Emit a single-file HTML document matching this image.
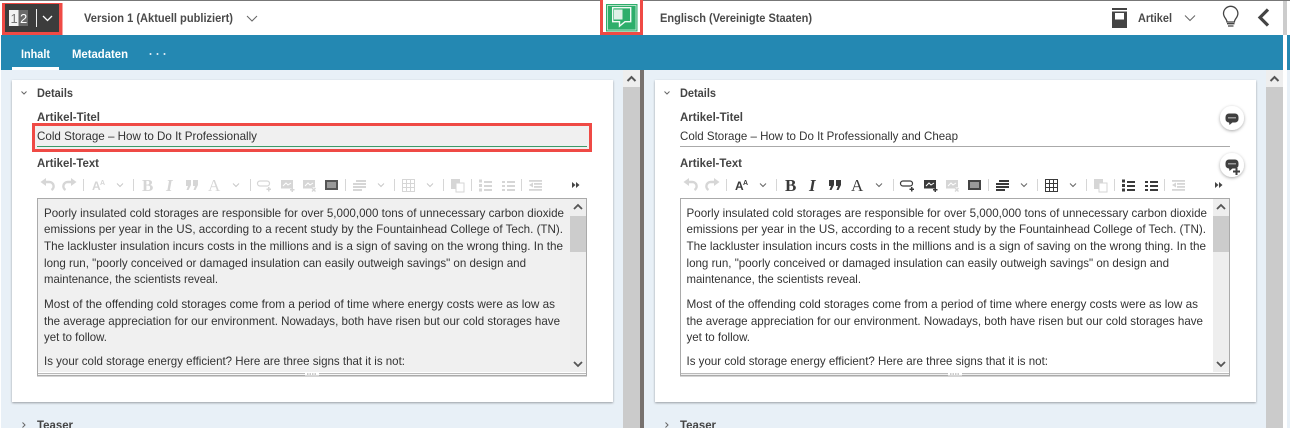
<!DOCTYPE html>
<html lang="de"><head><meta charset="utf-8"><title>Artikel</title>
<style>
html,body{margin:0;padding:0;width:1290px;height:428px;overflow:hidden;background:#fff}
svg{display:block;position:absolute;left:0;top:0}
text{font-family:"Liberation Sans",sans-serif}
.b{font-size:12px;fill:#333;font-weight:400}
.h{font-size:12px;fill:#4a4a4a;font-weight:700}
.l{font-size:12px;fill:#444;font-weight:700}
.w{font-size:12px;fill:#fff;font-weight:700}
.s{font-family:"Liberation Serif",serif;font-size:17px}
.c{fill:none;stroke:#666;stroke-width:1}
</style></head><body>
<svg width="1290" height="428" viewBox="0 0 1290 428" xmlns="http://www.w3.org/2000/svg">
<defs><filter id="sh" x="-5%" y="-5%" width="110%" height="110%"><feDropShadow dx="0" dy="1" stdDeviation="1" flood-color="#000" flood-opacity=".35"/></filter>
<filter id="sc" x="-40%" y="-40%" width="180%" height="180%"><feDropShadow dx="0" dy="1" stdDeviation="1.5" flood-color="#000" flood-opacity=".35"/></filter></defs>

<!-- base -->
<rect width="1290" height="428" fill="#fff"/>
<rect width="1290" height="1" fill="#777"/>
<rect x="1" y="35" width="1282" height="35" fill="#2488b2"/>
<rect x="1287" y="35" width="3" height="35" fill="#2488b2"/>
<rect x="1283" y="1" width="4" height="34" fill="#ccc"/>
<rect x="1" y="70" width="622" height="358" fill="#e8f0f7"/>
<rect x="644" y="70" width="622" height="358" fill="#e8f0f7"/>
<rect x="1287" y="70" width="3" height="358" fill="#e8f0f7"/>

<!-- scroll tracks -->
<rect x="623" y="70" width="17" height="358" fill="#cbcbcb"/>
<rect x="623" y="70" width="17" height="17" fill="#eee"/>
<path d="M627.500 81l4-4 4 4" fill="none" stroke="#555" stroke-width="2"/>
<rect x="640" y="70" width="4" height="358" fill="#77716e"/>
<rect x="1266" y="70" width="17" height="358" fill="#cbcbcb"/>
<rect x="1266" y="70" width="17" height="17" fill="#eee"/>
<path d="M1270.500 81l4-4 4 4" fill="none" stroke="#555" stroke-width="2"/>

<!-- header left -->
<rect x="2" y="3" width="60.500" height="32" fill="#ef4a45"/>
<rect x="5" y="4" width="54" height="28" fill="#3c3c3c"/>
<rect x="9" y="10" width="9.500" height="16" fill="#f2f2f2"/>
<rect x="18.500" y="10" width="9.500" height="16" fill="#6a6a6a"/>
<text x="10.500" y="23" style="font-size:13px;fill:#777">1</text>
<text x="20" y="23" style="font-size:13px;fill:#fff">2</text>
<rect x="36" y="9" width="1" height="18" fill="#eee"/>
<path d="M43 16l4.500 4.500 4.500-4.500" fill="none" stroke="#fff" stroke-width="1.300"/>
<text class="h" x="84" y="22" textLength="149" lengthAdjust="spacingAndGlyphs">Version 1 (Aktuell publiziert)</text>
<path d="M247 16l5 5 5-5" class="c"/>

<!-- green button -->
<rect x="600" y="0" width="43" height="35" fill="#ef4a45"/>
<rect x="603" y="0" width="37" height="32" fill="#fff"/>
<rect x="606" y="4" width="31.500" height="27.500" fill="#2eae6b"/>
<rect x="607.500" y="5.500" width="28.500" height="24.500" fill="none" stroke="#d5efe0" stroke-width=".8"/>
<path d="M612.700 7.700h18v14h-5.700l-5.500 4.500v-4.500h-6.800z" fill="none" stroke="#f2faf5" stroke-width="1.400"/>
<rect x="614" y="9.500" width="8.500" height="10" fill="#dff1e7"/>

<!-- header right -->
<text class="h" x="660" y="22" textLength="152" lengthAdjust="spacingAndGlyphs">Englisch (Vereinigte Staaten)</text>
<path d="M1112 8h15v20h-15z" fill="#444"/>
<rect x="1112" y="10" width="15" height="1.500" fill="#fff"/>
<rect x="1115" y="13" width="9" height="6.500" fill="#fff"/>
<text class="h" x="1138" y="22" textLength="34" lengthAdjust="spacingAndGlyphs">Artikel</text>
<path d="M1185 15.500l5 5 5-5" class="c"/>
<path d="M1227 22c0-3-3.500-4.500-3.500-8.500a7.200 7.200 0 0 1 14.400 0c0 4-3.500 5.500-3.500 8.500z" fill="none" stroke="#444" stroke-width="1.300"/>
<path d="M1227 23.700h7.500M1228 26h5.500" stroke="#444" stroke-width="1.300"/>
<path d="M1268 9.500l-8 8 8 8" fill="none" stroke="#444" stroke-width="3.200"/>

<!-- tabs -->
<text class="w" x="21" y="58" textLength="29" lengthAdjust="spacingAndGlyphs">Inhalt</text>
<rect x="12" y="67" width="47" height="3" fill="#fff"/>
<text class="w" x="72" y="58" textLength="56" lengthAdjust="spacingAndGlyphs">Metadaten</text>
<circle cx="150.500" cy="54" r="1" fill="#e8f0f7"/><circle cx="157.500" cy="54" r="1" fill="#e8f0f7"/><circle cx="164.500" cy="54" r="1" fill="#e8f0f7"/>

<!-- LEFT PANEL -->
<rect x="12" y="80" width="601" height="322" fill="#fff" filter="url(#sh)"/>
<path d="M21.500 91.500l2.500 2.500 2.500-2.500" class="c"/>
<text class="l" x="37" y="97" textLength="36" lengthAdjust="spacingAndGlyphs">Details</text>
<text class="l" x="37" y="121" textLength="63" lengthAdjust="spacingAndGlyphs">Artikel-Titel</text>
<rect x="32" y="123" width="560" height="29" fill="#ef4a45"/>
<rect x="35" y="126" width="554" height="23" fill="#f0f0f0"/>
<rect x="37" y="146" width="550" height="1" fill="#3d9a68"/>
<text class="b" x="37" y="140" textLength="220" lengthAdjust="spacingAndGlyphs">Cold Storage – How to Do It Professionally</text>
<text class="l" x="37" y="167" textLength="62" lengthAdjust="spacingAndGlyphs">Artikel-Text</text>

<g color="#d6d6d6" fill="currentColor" stroke="none">
<path d="M46 178v8l-5.500-4z"/><path d="M45 182h4.500a4.300 4.300 0 0 1 2 8" fill="none" stroke="currentColor" stroke-width="2.400"/>
<path d="M71 178v8l5.500-4z"/><path d="M72 182h-4.500a4.300 4.300 0 0 0-2 8" fill="none" stroke="currentColor" stroke-width="2.400"/>
<rect x="83" y="179" width="1" height="12"/>
<text x="92" y="190" style="font-size:12px;font-weight:700">A</text><text x="100" y="185" style="font-size:7px;font-weight:700">A</text>
<rect x="133" y="179" width="1" height="12"/>
<text class="s" x="142" y="191" style="font-weight:700">B</text>
<text class="s" x="166" y="191" style="font-style:italic;font-weight:700">I</text>
<path d="M186 180h5v5l-2.500 5h-2l1.500-4h-2zM193 180h5v5l-2.500 5h-2l1.500-4h-2z"/>
<text class="s" x="208" y="191">A</text>
<rect x="250" y="179" width="1" height="12"/>
<path d="M260 181h7a2.500 2.500 0 0 1 0 5h-7a2.500 2.500 0 0 1 0-5z" fill="none" stroke="currentColor" stroke-width="1.200"/>
<path d="M268 187h1.500v1.500h1.500v1.500h-1.500v1.500H268V190h-1.500v-1.500h1.500z"/>
<rect x="281" y="180" width="12" height="8.500"/><path d="M283 186l3-3 2 2 3-2" fill="none" stroke="#fff"/>
<path d="M291.500 187.500h1.500v1.500h1.500v1.500H293v1.500h-1.500v-1.500H290V189h1.500z"/>
<rect x="303" y="180" width="12" height="8.500"/><path d="M305 186l3-3 2 2 3-2" fill="none" stroke="#fff"/>
<path d="M312 188l3.500 3.500m0-3.500l-3.500 3.500" stroke="#fff" stroke-width="3"/><path d="M312 188l3.500 3.500m0-3.500l-3.500 3.500" stroke="currentColor" stroke-width="1.400"/>
<rect x="345" y="179" width="1" height="12"/>
<rect x="356" y="180" width="10" height="2"/><rect x="353" y="183" width="13" height="2"/><rect x="353" y="186" width="13" height="2"/><rect x="353" y="189" width="9" height="2"/>
<rect x="394" y="179" width="1" height="12"/>
<path d="M402.500 179.500h12v12h-12zM406.500 179.500v12M410.500 179.500v12M402.500 183.500h12M402.500 187.500h12" fill="none" stroke="currentColor"/>
<rect x="443" y="179" width="1" height="12"/>
<rect x="451" y="179" width="9" height="10"/><rect x="456" y="183" width="8" height="9" fill="#fff" stroke="currentColor"/>
<rect x="471" y="179" width="1" height="12"/>
<rect x="479" y="179.500" width="3" height="3"/><rect x="479" y="184" width="3" height="3"/><rect x="479" y="188.500" width="3" height="3"/><rect x="484" y="181" width="8" height="2"/><rect x="484" y="185" width="8" height="2"/><rect x="484" y="189" width="8" height="2"/>
<rect x="502" y="181" width="3" height="2"/><rect x="502" y="185" width="3" height="2"/><rect x="502" y="189" width="3" height="2"/><rect x="507" y="181" width="8" height="2"/><rect x="507" y="185" width="8" height="2"/><rect x="507" y="189" width="8" height="2"/>
<rect x="521" y="179" width="1" height="12"/>
<rect x="529" y="180" width="13" height="1.800"/><rect x="534" y="183" width="8" height="1.800"/><rect x="534" y="186" width="8" height="1.800"/><rect x="529" y="189" width="13" height="1.800"/><path d="M533 182.500v5l-4-2.500z"/>
</g>
<path d="M117 183.500l3 3 3-3M233 183.500l3 3 3-3M378 183.500l3 3 3-3M427 183.500l3 3 3-3" fill="none" stroke="#c8c8c8"/>
<rect x="325" y="180" width="13" height="10" fill="#555"/><rect x="327" y="182" width="9" height="6" fill="#999"/>
<path d="M572 182v6l3.500-3zM576 182v6l3.500-3z" fill="#444"/>

<rect x="37.500" y="198.500" width="549" height="177" fill="#f0f0f0" stroke="#aaa"/>
<rect x="38" y="372" width="548" height="1.200" fill="#fff"/>
<rect x="38" y="373.200" width="548" height="1" fill="#aaa"/>
<rect x="38" y="374.200" width="548" height="1" fill="#fff"/>
<rect x="37" y="375" width="550" height="1.500" fill="#aaa"/>
<rect x="305" y="372" width="14" height="3.500" fill="#fff"/>
<path d="M307 374h10" stroke="#999" stroke-dasharray="1.500 1"/>
<rect x="570" y="199" width="16" height="173" fill="#eee"/>
<rect x="570" y="216" width="16" height="36" fill="#ccc"/>
<path d="M574 209l4-4 4 4M574 362l4 4 4-4" fill="none" stroke="#555" stroke-width="1.800"/>

<g>
<text class="b" x="44" y="217" textLength="520" lengthAdjust="spacingAndGlyphs">Poorly insulated cold storages are responsible for over 5,000,000 tons of unnecessary carbon dioxide</text>
<text class="b" x="44" y="233" textLength="519" lengthAdjust="spacingAndGlyphs">emissions per year in the US, according to a recent study by the Fountainhead College of Tech. (TN).</text>
<text class="b" x="44" y="250" textLength="519" lengthAdjust="spacingAndGlyphs">The lackluster insulation incurs costs in the millions and is a sign of saving on the wrong thing. In the</text>
<text class="b" x="44" y="267" textLength="482" lengthAdjust="spacingAndGlyphs">long run, "poorly conceived or damaged insulation can easily outweigh savings" on design and</text>
<text class="b" x="44" y="283" textLength="174" lengthAdjust="spacingAndGlyphs">maintenance, the scientists reveal.</text>
<text class="b" x="44" y="308" textLength="511" lengthAdjust="spacingAndGlyphs">Most of the offending cold storages come from a period of time where energy costs were as low as</text>
<text class="b" x="44" y="325" textLength="516" lengthAdjust="spacingAndGlyphs">the average appreciation for our environment. Nowadays, both have risen but our cold storages have</text>
<text class="b" x="44" y="341" textLength="63" lengthAdjust="spacingAndGlyphs">yet to follow.</text>
<text class="b" x="44" y="365" textLength="361" lengthAdjust="spacingAndGlyphs">Is your cold storage energy efficient? Here are three signs that it is not:</text>
</g>
<path d="M22.500 422.500l2.500 2.500-2.500 2.500" class="c"/>
<text class="l" x="37" y="429" textLength="36" lengthAdjust="spacingAndGlyphs">Teaser</text>

<!-- RIGHT PANEL -->
<rect x="655" y="80" width="601" height="322" fill="#fff" filter="url(#sh)"/>
<path d="M664.500 91.500l2.500 2.500 2.500-2.500" class="c"/>
<text class="l" x="680" y="97" textLength="36" lengthAdjust="spacingAndGlyphs">Details</text>
<text class="l" x="680" y="121" textLength="63" lengthAdjust="spacingAndGlyphs">Artikel-Titel</text>
<text class="b" x="680" y="140" textLength="278" lengthAdjust="spacingAndGlyphs">Cold Storage – How to Do It Professionally and Cheap</text>
<rect x="680" y="146" width="550" height="1" fill="#aaa"/>
<text class="l" x="680" y="167" textLength="62" lengthAdjust="spacingAndGlyphs">Artikel-Text</text>

<circle cx="1232" cy="118" r="12" fill="#fff" filter="url(#sc)"/>
<rect x="1225.500" y="113.500" width="13" height="9" rx="3.500" fill="#3f3f3f"/><rect x="1228" y="117" width="8" height="1.500" fill="#999"/><path d="M1229 122h4l-3.500 3z" fill="#3f3f3f"/>
<circle cx="1232" cy="165" r="12" fill="#fff" filter="url(#sc)"/>
<rect x="1225.500" y="159.500" width="13" height="9" rx="3.500" fill="#3f3f3f"/><rect x="1228" y="163" width="8" height="1.500" fill="#999"/><path d="M1229 168h4l-3.500 3z" fill="#3f3f3f"/>
<path d="M1235.500 168h2v2.500h2.500v2h-2.500v2.500h-2v-2.500H1233v-2h2.500z" fill="#3f3f3f"/>

<g color="#3a3a3a" fill="currentColor" stroke="none">
<g color="#d6d6d6" fill="currentColor">
<path d="M689 178v8l-5.500-4z"/><path d="M688 182h4.500a4.300 4.300 0 0 1 2 8" fill="none" stroke="currentColor" stroke-width="2.400"/>
<path d="M714 178v8l5.500-4z"/><path d="M715 182h-4.500a4.300 4.300 0 0 0-2 8" fill="none" stroke="currentColor" stroke-width="2.400"/>
<rect x="726" y="179" width="1" height="12"/>
<rect x="776" y="179" width="1" height="12"/>
<rect x="893" y="179" width="1" height="12"/>
<rect x="946" y="180" width="12" height="8.500"/><path d="M948 186l3-3 2 2 3-2" fill="none" stroke="#fff"/>
<path d="M955 188l3.500 3.500m0-3.500l-3.500 3.500" stroke="#fff" stroke-width="3"/><path d="M955 188l3.500 3.500m0-3.500l-3.500 3.500" stroke="currentColor" stroke-width="1.400"/>
<rect x="988" y="179" width="1" height="12"/><rect x="1037" y="179" width="1" height="12"/><rect x="1086" y="179" width="1" height="12"/>
<rect x="1094" y="179" width="9" height="10"/><rect x="1099" y="183" width="8" height="9" fill="#fff" stroke="currentColor"/>
<rect x="1114" y="179" width="1" height="12"/><rect x="1164" y="179" width="1" height="12"/>
<rect x="1172" y="180" width="13" height="1.800"/><rect x="1177" y="183" width="8" height="1.800"/><rect x="1177" y="186" width="8" height="1.800"/><rect x="1172" y="189" width="13" height="1.800"/><path d="M1176 182.500v5l-4-2.500z"/>
</g>
<text x="735" y="190" style="font-size:12px;font-weight:700">A</text><text x="743" y="185" style="font-size:7px;font-weight:700">A</text>
<text class="s" x="785" y="191" style="font-weight:700">B</text>
<text class="s" x="809" y="191" style="font-style:italic;font-weight:700">I</text>
<path d="M829 180h5v5l-2.500 5h-2l1.500-4h-2zM836 180h5v5l-2.500 5h-2l1.500-4h-2z"/>
<text class="s" x="851" y="191">A</text>
<path d="M903 181h7a2.500 2.500 0 0 1 0 5h-7a2.500 2.500 0 0 1 0-5z" fill="none" stroke="currentColor" stroke-width="1.200"/>
<path d="M911 187h1.500v1.500h1.500v1.500h-1.500v1.500H911V190h-1.500v-1.500h1.500z"/>
<rect x="924" y="180" width="12" height="8.500"/><path d="M926 186l3-3 2 2 3-2" fill="none" stroke="#fff"/><path d="M934.500 187.500h1.500v1.500h1.500v1.500H936v1.500h-1.500v-1.500H933V189h1.500z"/>
<rect x="968" y="180" width="13" height="10" fill="#444"/><rect x="970" y="182" width="9" height="6" fill="#999"/>
<rect x="999" y="180" width="10" height="2"/><rect x="996" y="183" width="13" height="2"/><rect x="996" y="186" width="13" height="2"/><rect x="996" y="189" width="9" height="2"/>
<path d="M1045.500 179.500h12v12h-12zM1049.500 179.500v12M1053.500 179.500v12M1045.500 183.500h12M1045.500 187.500h12" fill="none" stroke="currentColor"/>
<rect x="1122" y="179.500" width="3" height="3"/><rect x="1122" y="184" width="3" height="3"/><rect x="1122" y="188.500" width="3" height="3"/><rect x="1127" y="181" width="8" height="2"/><rect x="1127" y="185" width="8" height="2"/><rect x="1127" y="189" width="8" height="2"/>
<rect x="1145" y="181" width="3" height="2"/><rect x="1145" y="185" width="3" height="2"/><rect x="1145" y="189" width="3" height="2"/><rect x="1150" y="181" width="8" height="2"/><rect x="1150" y="185" width="8" height="2"/><rect x="1150" y="189" width="8" height="2"/>
</g>
<path d="M760 183.500l3 3 3-3M876 183.500l3 3 3-3M1021 183.500l3 3 3-3M1070 183.500l3 3 3-3" fill="none" stroke="#666"/>
<path d="M1215 182v6l3.500-3zM1219 182v6l3.500-3z" fill="#444"/>

<rect x="680.500" y="198.500" width="549" height="177" fill="#fff" stroke="#aaa"/>
<rect x="681" y="373.200" width="548" height="1" fill="#aaa"/>
<rect x="680" y="375" width="550" height="1.500" fill="#aaa"/>
<rect x="948" y="372" width="14" height="3.500" fill="#fff"/>
<path d="M950 374h10" stroke="#999" stroke-dasharray="1.500 1"/>
<rect x="1213" y="199" width="16" height="173" fill="#eee"/>
<rect x="1213" y="216" width="16" height="36" fill="#ccc"/>
<path d="M1217 209l4-4 4 4M1217 362l4 4 4-4" fill="none" stroke="#555" stroke-width="1.800"/>

<g>
<text class="b" x="686.500" y="217" textLength="520.500" lengthAdjust="spacingAndGlyphs">Poorly insulated cold storages are responsible for over 5,000,000 tons of unnecessary carbon dioxide</text>
<text class="b" x="686.500" y="233" textLength="519.500" lengthAdjust="spacingAndGlyphs">emissions per year in the US, according to a recent study by the Fountainhead College of Tech. (TN).</text>
<text class="b" x="686.500" y="250" textLength="519.500" lengthAdjust="spacingAndGlyphs">The lackluster insulation incurs costs in the millions and is a sign of saving on the wrong thing. In the</text>
<text class="b" x="686.500" y="267" textLength="482.500" lengthAdjust="spacingAndGlyphs">long run, "poorly conceived or damaged insulation can easily outweigh savings" on design and</text>
<text class="b" x="686.500" y="283" textLength="174.500" lengthAdjust="spacingAndGlyphs">maintenance, the scientists reveal.</text>
<text class="b" x="686.500" y="308" textLength="511.500" lengthAdjust="spacingAndGlyphs">Most of the offending cold storages come from a period of time where energy costs were as low as</text>
<text class="b" x="686.500" y="325" textLength="516.500" lengthAdjust="spacingAndGlyphs">the average appreciation for our environment. Nowadays, both have risen but our cold storages have</text>
<text class="b" x="686.500" y="341" textLength="63.500" lengthAdjust="spacingAndGlyphs">yet to follow.</text>
<text class="b" x="686.500" y="365" textLength="361.500" lengthAdjust="spacingAndGlyphs">Is your cold storage energy efficient? Here are three signs that it is not:</text>
</g>
<path d="M665.500 422.500l2.500 2.500-2.500 2.500" class="c"/>
<text class="l" x="680" y="429" textLength="36" lengthAdjust="spacingAndGlyphs">Teaser</text>
</svg>
</body></html>
